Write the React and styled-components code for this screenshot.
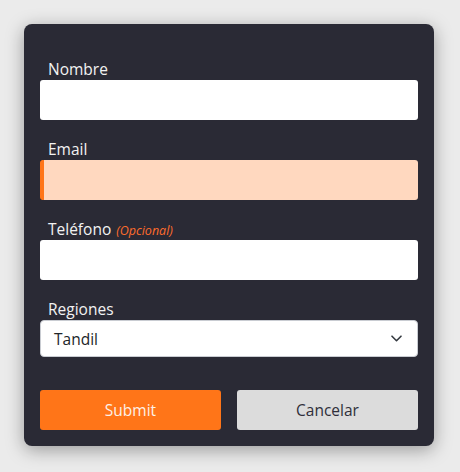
import React, { useState } from 'react';
import styled, { createGlobalStyle } from 'styled-components';

const GlobalStyle = createGlobalStyle`
  body {
    margin: 0;
    padding: 0;
    background: #ebebeb;
    font-family: 'Open Sans', 'Noto Sans', sans-serif;
  }
`;

const Page = styled.div`
  padding: 24px 26px 26px 24px;
`;

const Card = styled.form`
  width: 410px;
  box-sizing: border-box;
  background: #2a2a35;
  border-radius: 8px;
  box-shadow: 0 4px 18px rgba(0, 0, 0, 0.35);
  padding: 36px 16px 16px;
  display: flex;
  flex-direction: column;
  gap: 20px;
`;

const Field = styled.div`
  display: flex;
  flex-direction: column;
`;

const Label = styled.label`
  color: #f2f2f2;
  font-size: 15.5px;
  line-height: 18px;
  height: 20px;
  padding-left: 8px;
  display: flex;
  align-items: baseline;
  gap: 5px;
`;

const Optional = styled.span`
  color: #ff6c2c;
  font-size: 12.5px;
  line-height: 18px;
  font-style: italic;
`;

const Input = styled.input`
  box-sizing: border-box;
  height: 40px;
  width: 100%;
  border: none;
  border-left: ${(p) => (p.$active ? '4px solid #ff7518' : 'none')};
  border-radius: 3px;
  background: ${(p) => (p.$active ? '#ffd8bf' : '#ffffff')};
  font-family: inherit;
  font-size: 15px;
  padding: 0 12px;
  outline: none;
`;

const SelectWrap = styled.div`
  height: 37px;
  background: #fff;
  border: 1px solid #c9ccd2;
  border-radius: 4px;
  box-sizing: border-box;
  display: flex;
  align-items: center;
  justify-content: space-between;
  padding: 0 15px 0 13px;
  color: #212529;
  font-size: 15.5px;
`;

const Chevron = styled.svg`
  width: 11px;
  height: 7px;
`;

const Actions = styled.div`
  display: grid;
  grid-template-columns: 1fr 1fr;
  gap: 16px;
  margin-top: 13px;
`;

const Button = styled.button`
  height: 40px;
  border: none;
  border-radius: 3px;
  font-family: inherit;
  font-size: 15.5px;
  background: ${(p) => (p.$primary ? '#ff7518' : '#dcdcdc')};
  color: ${(p) => (p.$primary ? '#fdf1e8' : '#2f2f3a')};
  cursor: pointer;
`;

export default function App() {
  const [region] = useState('Tandil');
  return (
    <Page>
      <GlobalStyle />
      <Card onSubmit={(e) => e.preventDefault()}>
        <Field>
          <Label>Nombre</Label>
          <Input type="text" />
        </Field>
        <Field>
          <Label>Email</Label>
          <Input type="email" $active />
        </Field>
        <Field>
          <Label>
            <span>Teléfono</span>
            <Optional>(Opcional)</Optional>
          </Label>
          <Input type="tel" />
        </Field>
        <Field>
          <Label>Regiones</Label>
          <SelectWrap>
            <span>{region}</span>
            <Chevron viewBox="0 0 11 7" fill="none" stroke="#343a40" strokeWidth="1.6" strokeLinecap="round" strokeLinejoin="round">
              <path d="M1 1.2l4.5 4.5 4.5-4.5" />
            </Chevron>
          </SelectWrap>
        </Field>
        <Actions>
          <Button type="submit" $primary>Submit</Button>
          <Button type="button">Cancelar</Button>
        </Actions>
      </Card>
    </Page>
  );
}
